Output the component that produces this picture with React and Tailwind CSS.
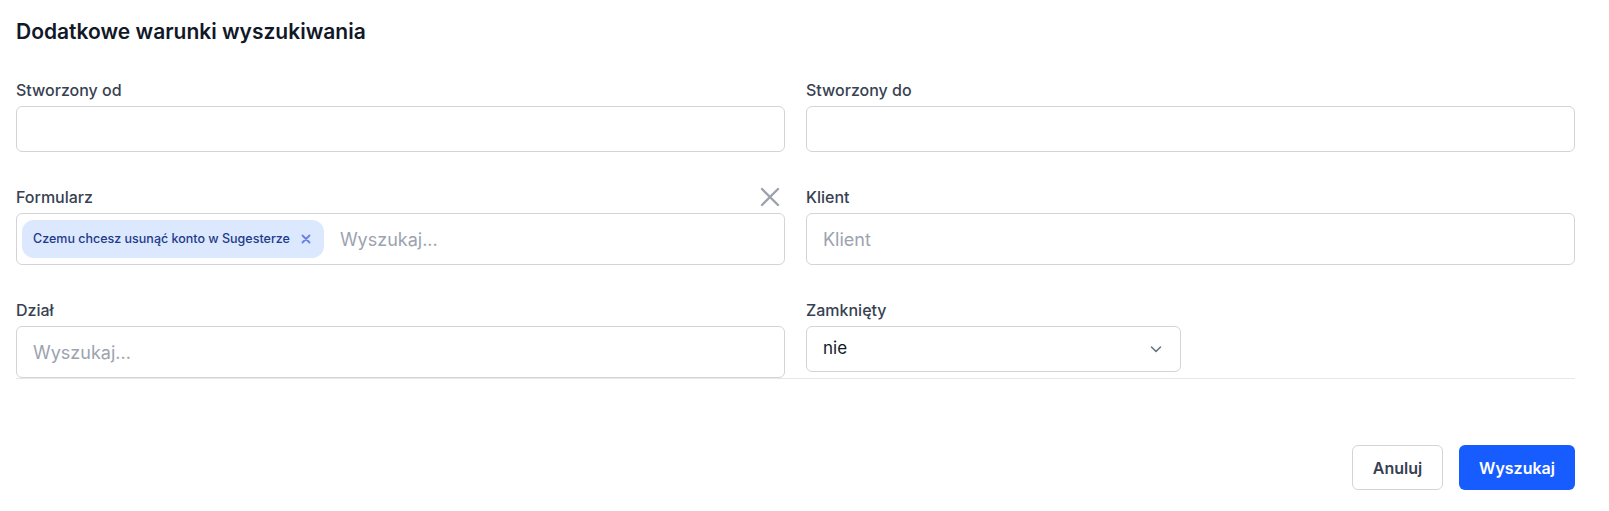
import React from "react";

function Label({ children, right }) {
  return (
    <div className="mb-1 flex h-6 items-center justify-between">
      <span className="text-[16px] font-medium leading-6 text-[#374151]">{children}</span>
      {right}
    </div>
  );
}

function ClearIcon() {
  return (
    <svg className="mr-[3px] h-[24px] w-[24px] text-[#9ca3af]" viewBox="0 0 24 24" fill="none" stroke="currentColor" strokeWidth="2.4" strokeLinecap="round">
      <path d="M4 4l16 16M20 4L4 20" />
    </svg>
  );
}

export default function App() {
  return (
    <div className="min-h-[511px] bg-white font-['Inter',sans-serif]">
      <div className="ml-4 w-[1559px] pt-[18px]">
        <h2 className="text-[21px] font-semibold leading-7 text-[#111827]">Dodatkowe warunki wyszukiwania</h2>

        <div className="mt-[32px] grid grid-cols-2 gap-x-[21px] gap-y-[33px] border-b border-[#e5e7eb]">
          <div>
            <Label>Stworzony od</Label>
            <div className="h-[46px] rounded-md border border-[#d4d4d8] bg-white" />
          </div>
          <div>
            <Label>Stworzony do</Label>
            <div className="h-[46px] rounded-md border border-[#d4d4d8] bg-white" />
          </div>

          <div>
            <Label right={<ClearIcon />}>Formularz</Label>
            <div className="flex h-[52px] items-center gap-4 rounded-md border border-[#d4d4d8] bg-white pl-[5px]">
              <span className="flex h-[38px] items-center gap-[10px] rounded-xl bg-[#dbe8fd] pl-[11px] pr-[12px] text-[12.5px] font-medium text-[#1e3a8a]">
                Czemu chcesz usunąć konto w Sugesterze
                <svg className="h-3 w-3 text-[#6b82e8]" viewBox="0 0 12 12" fill="none" stroke="currentColor" strokeWidth="1.9" strokeLinecap="round">
                  <path d="M2.5 2.5l7 7M9.5 2.5l-7 7" />
                </svg>
              </span>
              <span className="text-[18px] text-[#9ca3af]">Wyszukaj...</span>
            </div>
          </div>
          <div>
            <Label>Klient</Label>
            <div className="flex h-[52px] items-center rounded-md border border-[#d4d4d8] bg-white px-4">
              <span className="text-[18px] text-[#9ca3af]">Klient</span>
            </div>
          </div>

          <div>
            <Label>Dział</Label>
            <div className="flex h-[52px] items-center rounded-md border border-[#d4d4d8] bg-white px-4">
              <span className="text-[18px] text-[#9ca3af]">Wyszukaj...</span>
            </div>
          </div>
          <div>
            <Label>Zamknięty</Label>
            <div className="flex h-[46px] w-[375px] items-center justify-between rounded-md border border-[#d4d4d8] bg-white pl-4 pr-4">
              <span className="text-[17px] text-[#111827]">nie</span>
              <svg className="h-4 w-4 text-[#6b7280]" viewBox="0 0 16 16" fill="none" stroke="currentColor" strokeWidth="1.6" strokeLinecap="round" strokeLinejoin="round">
                <path d="M3.5 6l4.5 4.5L12.5 6" />
              </svg>
            </div>
          </div>
        </div>

        <div className="mt-[66px] flex justify-end gap-4">
          <button className="h-[45px] w-[91px] rounded-md border border-[#d1d5db] bg-white text-[16px] font-semibold text-[#374151]">
            Anuluj
          </button>
          <button className="h-[45px] w-[116px] rounded-md bg-[#175cff] text-[16px] font-semibold text-white">
            Wyszukaj
          </button>
        </div>
      </div>
    </div>
  );
}
